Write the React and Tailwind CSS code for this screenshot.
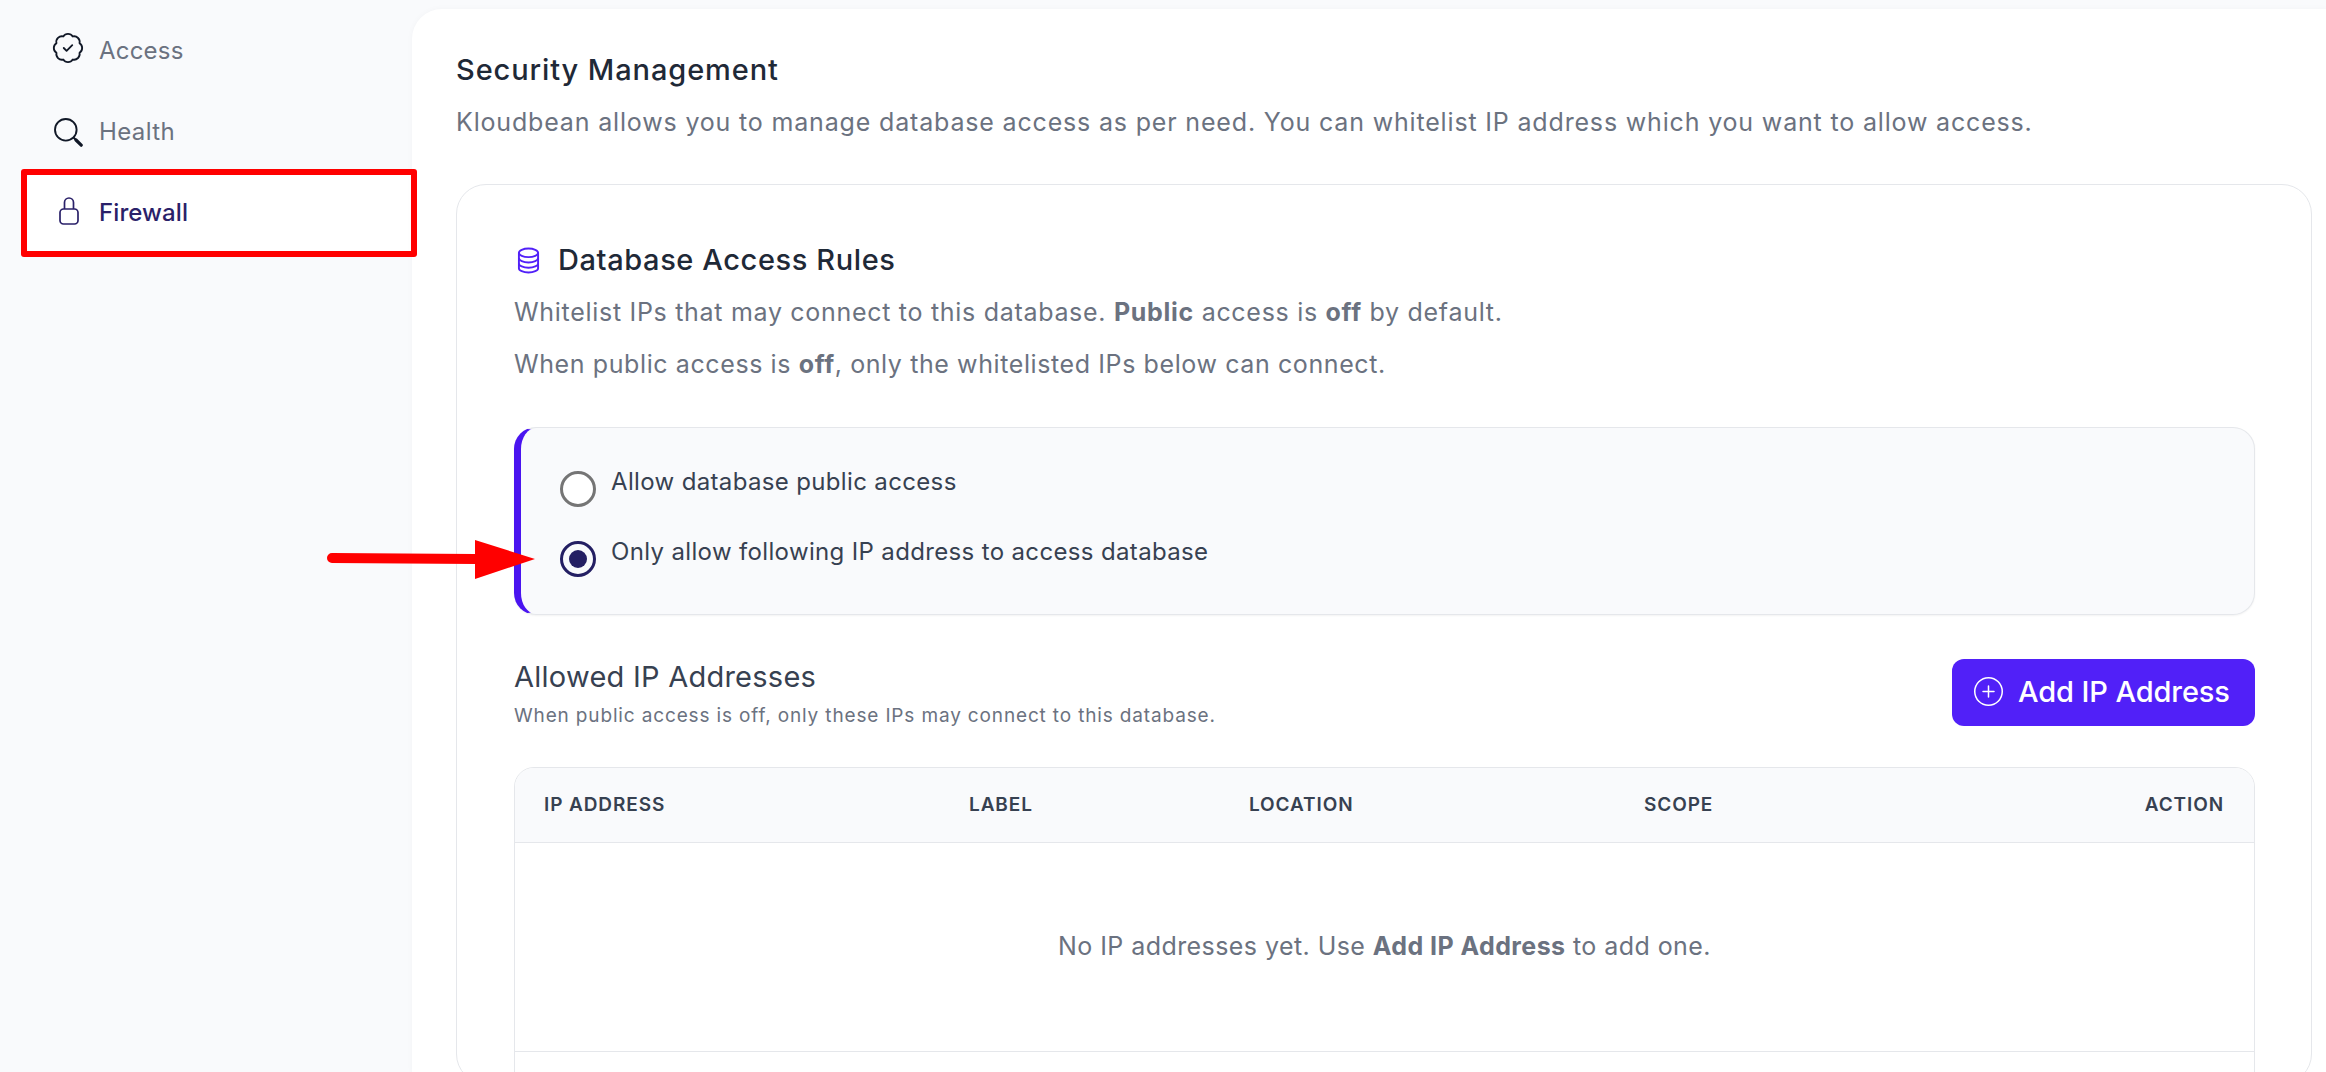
import { BadgeCheck, CirclePlus } from "lucide-react";

function HealthIcon() {
  return (
    <svg viewBox="0 0 29 29" className="w-[29px] h-[29px] shrink-0" fill="none" stroke="#111827">
      <circle cx="11.8" cy="11.8" r="10.8" strokeWidth="1.9" />
      <path d="M19.5 19.5l3 3" strokeWidth="1.9" />
      <path d="M22 22l5.2 5.2" strokeWidth="3.2" strokeLinecap="round" />
    </svg>
  );
}

function LockIcon() {
  return (
    <svg viewBox="0 0 20 28" className="w-[20px] h-[28px] shrink-0 -translate-y-[2px]" fill="none" stroke="#2a2169" strokeWidth="1.7">
      <path d="M5.5 12V5.5a4.5 4.5 0 0 1 9 0V12" />
      <rect x="1" y="12" width="18" height="15" rx="3.5" />
    </svg>
  );
}

function DbIcon() {
  return (
    <svg viewBox="0 0 24 28" className="w-[23px] h-[27px] shrink-0" fill="none" stroke="#5120f8" strokeWidth="2">
      <ellipse cx="12" cy="6" rx="10" ry="4.5" />
      <path d="M2 6v16c0 2.5 4.5 4.5 10 4.5s10-2 10-4.5V6" />
      <path d="M2 11.5c0 2.5 4.5 4.5 10 4.5s10-2 10-4.5" />
      <path d="M2 17c0 2.5 4.5 4.5 10 4.5s10-2 10-4.5" />
    </svg>
  );
}

function Radio({ checked, label }) {
  return (
    <label className="flex items-start gap-[15px]">
      <span
        className={
          checked
            ? "w-[36px] h-[36px] rounded-full border-[3px] border-[#241f63] flex items-center justify-center shrink-0"
            : "w-[36px] h-[36px] rounded-full border-[3px] border-[#757575] bg-white shrink-0"
        }
      >
        {checked && <span className="w-[18px] h-[18px] rounded-full bg-[#241f63]" />}
      </span>
      <span className="text-[24px] leading-[24px] -mt-[1px] text-[#374151] tracking-[0.35px]">{label}</span>
    </label>
  );
}

export default function App() {
  return (
    <div className="relative h-screen overflow-hidden flex bg-[#f9fafc] text-[#6b7280]" style={{ fontFamily: "Inter, 'Open Sans', sans-serif" }}>
      <aside className="w-[412px] shrink-0 pt-[24px]">
        <div className="flex items-center h-[54px] pl-[51px] gap-[14px] mb-[27px]">
          <BadgeCheck className="w-[34px] h-[34px] text-[#111827] shrink-0 -translate-y-[3px]" strokeWidth={1.3} />
          <span className="text-[24px] tracking-[0.2px] text-[#6b7280]">Access</span>
        </div>
        <div className="flex items-center h-[54px] pl-[54px] gap-[16px] mb-[27px]">
          <HealthIcon />
          <span className="text-[24px] tracking-[0.4px] text-[#6b7280]">Health</span>
        </div>
        <div className="flex items-center h-[82px] -mt-[14px] ml-[25px] pl-[34px] gap-[20px] bg-white rounded-l-xl">
          <LockIcon />
          <span className="text-[24px] tracking-[0.1px] font-medium text-[#2a2169]">Firewall</span>
        </div>
      </aside>

      <main className="flex-1 mt-[9px] bg-white rounded-tl-[30px] pl-[44px] pr-[14px] pt-[43px] shadow-[0_0_6px_rgba(0,0,0,0.03)]">
        <h1 className="text-[29px] leading-[36px] font-medium text-[#1f2937] tracking-[0.9px]">Security Management</h1>
        <p className="mt-[16px] text-[25px] leading-[36px] text-[#6b7280] tracking-[0.83px]">
          Kloudbean allows you to manage database access as per need. You can whitelist IP address which you want to allow access.
        </p>

        <section className="mt-[44px] border border-[#e5e7eb] rounded-[30px] pl-[57px] pr-[56px] pt-[57px] h-[900px]">
          <div className="flex items-center gap-[18px] h-[36px] pl-[3px]">
            <DbIcon />
            <h2 className="text-[29px] leading-[36px] font-medium text-[#1f2937] tracking-[0.6px]">Database Access Rules</h2>
          </div>
          <p className="mt-[16px] text-[25px] leading-[36px] text-[#6b7280] tracking-[0.7px]">
            Whitelist IPs that may connect to this database. <b className="font-bold">Public</b> access is <b className="font-bold">off</b> by default.
          </p>
          <p className="mt-[16px] text-[25px] leading-[36px] text-[#6b7280] tracking-[0.6px]">
            When public access is <b className="font-bold">off</b>, only the whitelisted IPs below can connect.
          </p>

          <div className="mt-[45px] h-[188px] bg-[#f9fafc] border border-[#e5e7eb] border-l-[7px] border-l-[#4a14f0] rounded-[22px] pl-[39px] pt-[43px] flex flex-col gap-[34px] shadow-[0_1px_2px_rgba(0,0,0,0.05)]">
            <Radio label="Allow database public access" />
            <Radio checked label="Only allow following IP address to access database" />
          </div>

          <div className="mt-[44px] flex justify-between items-start">
            <div>
              <h3 className="text-[29px] leading-[36px] text-[#374151] tracking-[0.25px]">Allowed IP Addresses</h3>
              <p className="mt-[9px] text-[19px] leading-[24px] text-[#6b7280] tracking-[0.85px]">When public access is off, only these IPs may connect to this database.</p>
            </div>
            <button className="w-[303px] h-[67px] bg-[#5120f8] rounded-[12px] flex items-center pl-[20px] pb-[2px] gap-[13px] text-white text-[29px] font-medium tracking-[-0.1px]">
              <CirclePlus className="w-[33px] h-[33px] shrink-0" strokeWidth={1.1} />
              Add IP Address
            </button>
          </div>

          <div className="mt-[39px] border border-[#e5e7eb] rounded-[20px] overflow-hidden h-[400px]">
            <div className="h-[75px] bg-[#f9fafc] border-b border-[#e5e7eb] grid grid-cols-[425px_280px_395px_1fr_auto] items-center pl-[29px] pr-[30px] text-[19px] font-semibold uppercase text-[#374151] tracking-[0.9px]">
              <span>IP Address</span>
              <span>Label</span>
              <span>Location</span>
              <span>Scope</span>
              <span>Action</span>
            </div>
            <div className="h-[209px] border-b border-[#e5e7eb] flex items-center justify-center text-[25px] tracking-[0.43px] text-[#6b7280]">
              <span>No IP addresses yet. Use <b className="font-bold">Add IP Address</b> to add one.</span>
            </div>
          </div>
        </section>
      </main>

      {/* annotations drawn on top of the page */}
      <div className="absolute left-[21px] top-[169px] w-[396px] h-[88px] border-[6px] border-[#ff0000] rounded-[3px]" />
      <svg className="absolute left-[320px] top-[530px] w-[225px] h-[60px]" viewBox="0 0 225 60">
        <path d="M12 23L155 24V10L215 29L155 49V34L12 33a5 5 0 0 1 0-10z" fill="#ff0000" />
      </svg>
    </div>
  );
}
